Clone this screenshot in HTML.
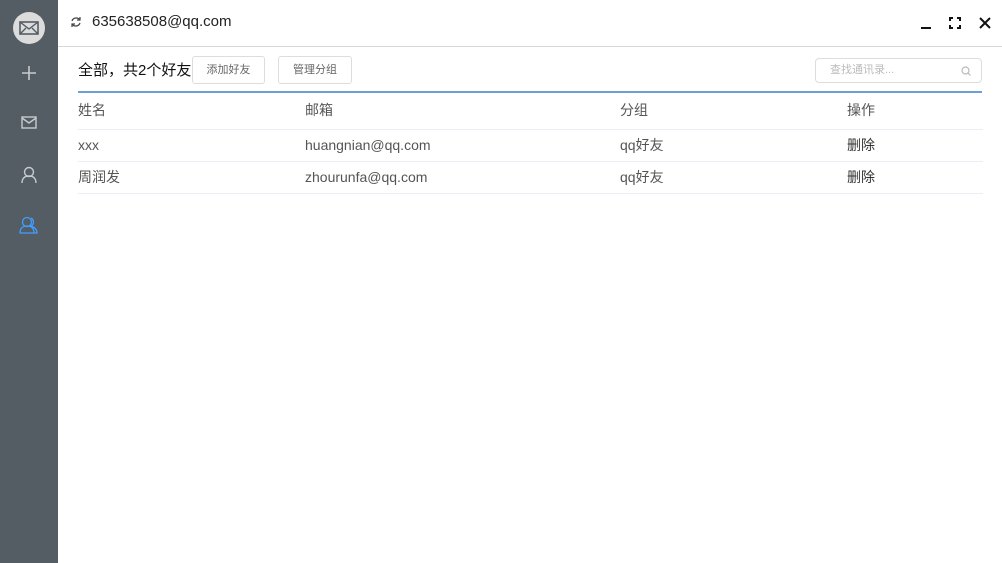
<!DOCTYPE html>
<html><head><meta charset="utf-8"><style>
*{margin:0;padding:0;box-sizing:border-box}
body{width:1002px;height:563px;overflow:hidden;background:#fff;font-family:"Liberation Sans","Noto Sans CJK SC",sans-serif;position:relative;color:#333}
.side{position:absolute;left:0;top:0;width:58px;height:563px;background:#545c64}
.ic{position:absolute;left:0;width:58px;display:flex;justify-content:center}
.top{position:absolute;left:58px;top:0;right:0;height:47px;border-bottom:1px solid #d8d8d8}
.abs{position:absolute;white-space:nowrap}
.btn{position:absolute;top:56px;height:28px;border:1px solid #ddd;border-radius:3px;font-size:11px;color:#666;text-align:center;line-height:26px}
.row{position:absolute;left:78px;width:905px;border-bottom:1px solid #ebeef5;font-size:14px;color:#555}
.row span{position:absolute;top:0;white-space:nowrap}
</style></head><body>
<div class="side">
 <div class="ic" style="top:12px"><svg width="32" height="32" viewBox="0 0 32 32"><circle cx="16" cy="16" r="16" fill="#dcdcdc"/><rect x="7" y="10" width="18" height="12" fill="none" stroke="#545c64" stroke-width="1.6"/><path d="M7 10l9 7 9-7M7 22l6-6M25 22l-6-6" fill="none" stroke="#545c64" stroke-width="1.4"/></svg></div>
 <div class="ic" style="top:64px"><svg width="18" height="18"><path d="M9 2v14M2 9h14" stroke="#c8cbcf" stroke-width="1.6"/></svg></div>
 <div class="ic" style="top:116px"><svg width="16" height="14"><rect x="1" y="1" width="14" height="11" fill="none" stroke="#c8cbcf" stroke-width="1.4"/><path d="M1 2l7 5 7-5" fill="none" stroke="#c8cbcf" stroke-width="1.4"/></svg></div>
 <div class="ic" style="top:166px"><svg width="16" height="18"><circle cx="8" cy="6" r="4.5" fill="none" stroke="#c8cbcf" stroke-width="1.4"/><path d="M1 17c0-5 3-7 7-7s7 2 7 7" fill="none" stroke="#c8cbcf" stroke-width="1.4"/></svg></div>
 <div class="ic" style="top:216px"><svg width="20" height="18"><circle cx="8" cy="6" r="4.5" fill="none" stroke="#409eff" stroke-width="1.3"/><path d="M1 17c0-5 3-7 7-7s7 2 7 7zM12 2a4.5 4.5 0 0 1 0 8c3 1 6 3 6 7h-3" fill="none" stroke="#409eff" stroke-width="1.3"/></svg></div>
</div>
<div class="top">
 <svg class="abs" style="left:12px;top:16px" width="12" height="12" viewBox="0 0 12 12"><path d="M10 4A4.5 4.5 0 0 0 2 5M2 8a4.5 4.5 0 0 0 8-1" fill="none" stroke="#444" stroke-width="1.3"/><path d="M10 1v3H7M2 11V8h3" fill="none" stroke="#444" stroke-width="1.2"/></svg>
 <div class="abs" style="left:34px;top:13px;font-size:15px;color:#222">635638508@qq.com</div>
 <div class="abs" style="left:863px;top:27px;width:10px;height:2px;background:#111"></div>
 <svg class="abs" style="left:891px;top:17px" width="12" height="12"><path d="M1 4V1h3M8 1h3v3M11 8v3H8M4 11H1V8" fill="none" stroke="#111" stroke-width="2"/></svg>
 <svg class="abs" style="left:921px;top:17px" width="12" height="12"><path d="M1 1l10 10M11 1L1 11" stroke="#111" stroke-width="2"/></svg>
</div>
<div class="abs" style="left:78px;top:59px;font-size:15px;color:#111">全部，共2个好友</div>
<div class="btn" style="left:192px;width:73px">添加好友</div>
<div class="btn" style="left:278px;width:74px">管理分组</div>
<div class="abs" style="left:815px;top:58px;width:167px;height:25px;border:1px solid #ddd;border-radius:4px;font-size:11px;color:#bbb;line-height:23px;padding-left:14px">查找通讯录...
 <svg style="position:absolute;right:10px;top:7px" width="10" height="10"><circle cx="4.5" cy="4.5" r="3.5" fill="none" stroke="#bbb" stroke-width="1.2"/><path d="M7 7l2.5 2.5" stroke="#bbb" stroke-width="1.2"/></svg></div>
<div class="row" style="top:93px;height:37px;line-height:34px"><span style="left:0">姓名</span><span style="left:227px">邮箱</span><span style="left:542px">分组</span><span style="left:769px">操作</span></div>
<div class="row" style="top:130px;height:32px;line-height:31px"><span style="left:0">xxx</span><span style="left:227px">huangnian@qq.com</span><span style="left:542px">qq好友</span><span style="left:769px;color:#333">删除</span></div>
<div class="row" style="top:162px;height:32px;line-height:31px"><span style="left:0">周润发</span><span style="left:227px">zhourunfa@qq.com</span><span style="left:542px">qq好友</span><span style="left:769px;color:#333">删除</span></div>
<div style="position:absolute;left:78px;top:91px;width:904px;height:2px;background:#6b9fd8"></div>
</body></html>
